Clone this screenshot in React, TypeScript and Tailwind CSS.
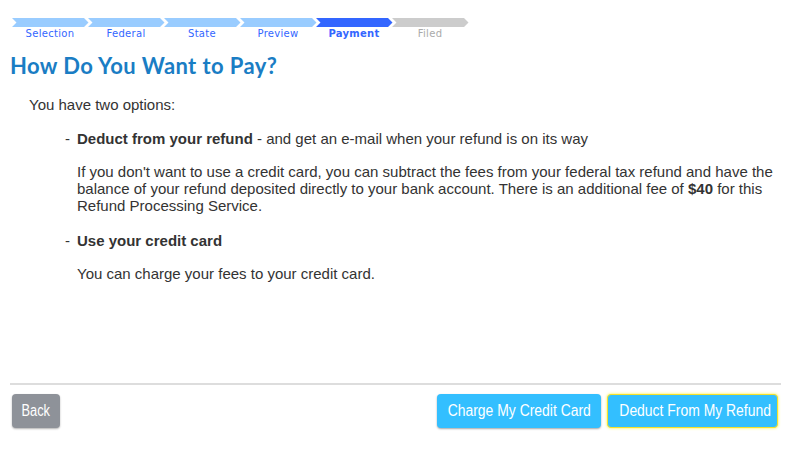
const steps = [
  { label: "Selection", state: "done" },
  { label: "Federal", state: "done" },
  { label: "State", state: "done" },
  { label: "Preview", state: "done" },
  { label: "Payment", state: "active" },
  { label: "Filed", state: "todo" },
]

function Chevron({ color }: { color: string }) {
  return (
    <svg width="76" height="9" viewBox="0 0 76 9" className="overflow-visible block">
      <polygon points="0,0 72,0 76.5,4.5 72,9 0,9 4.5,4.5" fill={color} />
    </svg>
  )
}

export default function App() {
  return (
    <div className="w-[801px] h-[461px] bg-white font-['Liberation_Sans',Arial,sans-serif] text-[#333]">
      {/* Progress steps */}
      <div className="flex pt-[18px] pl-[12px]">
        {steps.map((s) => (
          <div key={s.label} className="w-[76px] flex flex-col">
            <Chevron
              color={s.state === "active" ? "#3366ff" : s.state === "done" ? "#99ccff" : "#cccccc"}
            />
            <span
              className={
                "mt-[1px] text-center text-[10px] leading-[12px] tracking-[0.3px] font-['DejaVu_Sans',Verdana,sans-serif] " +
                (s.state === "active"
                  ? "font-bold text-[#3366ff]"
                  : s.state === "done"
                  ? "text-[#3366ff]"
                  : "text-[#aaaaaa]")
              }
            >
              {s.label}
            </span>
          </div>
        ))}
      </div>

      {/* Title */}
      <h1 className="mt-[12px] pl-[10px] text-[22px] leading-[28px] tracking-[0.4px] font-bold text-[#1a7dc4] font-['Lato',sans-serif]">
        How Do You Want to Pay?
      </h1>

      {/* Body */}
      <div className="mt-[16px] pl-[29px] pr-[20px] text-[15px] leading-[17px]">
        <p>You have two options:</p>

        <div className="mt-[17px] pl-[36px] flex">
          <span className="w-[12px]">-</span>
          <div className="flex-1">
            <p>
              <b>Deduct from your refund</b> - and get an e-mail when your refund is on its way
            </p>
            <p className="mt-[16px]">
              If you don't want to use a credit card, you can subtract the fees from your federal tax refund and have the
              balance of your refund deposited directly to your bank account. There is an additional fee of <b>$40</b> for
              this Refund Processing Service.
            </p>
          </div>
        </div>

        <div className="mt-[18px] pl-[36px] flex">
          <span className="w-[12px]">-</span>
          <div className="flex-1">
            <p>
              <b>Use your credit card</b>
            </p>
            <p className="mt-[16px]">You can charge your fees to your credit card.</p>
          </div>
        </div>
      </div>

      {/* Footer */}
      <div className="mt-[101px] ml-[10px] mr-[20px] border-t-2 border-[#dddddd] pt-[9px] flex items-center">
        <button className="h-[34px] w-[48px] ml-[2px] rounded-[4px] bg-[#8e9299] text-white text-[16px] shadow-[0_1px_2px_rgba(0,0,0,0.3)]">
          <span className="inline-block scale-x-[0.8]">Back</span>
        </button>
        <div className="ml-auto flex gap-[6px] mr-[3px]">
          <button className="h-[34px] w-[164px] rounded-[4px] bg-[#33bfff] text-white text-[16px] shadow-[0_1px_2px_rgba(0,0,0,0.35)] whitespace-nowrap">
            <span className="inline-block scale-x-[0.87]">Charge My Credit Card</span>
          </button>
          <button className="h-[34px] w-[171px] rounded-[4px] bg-[#33bfff] text-white text-[16px] border border-[#f5e12a] shadow-[0_0_3px_#ffee33] whitespace-nowrap">
            <span className="inline-block scale-x-[0.87]">Deduct From My Refund</span>
          </button>
        </div>
      </div>
    </div>
  )
}
